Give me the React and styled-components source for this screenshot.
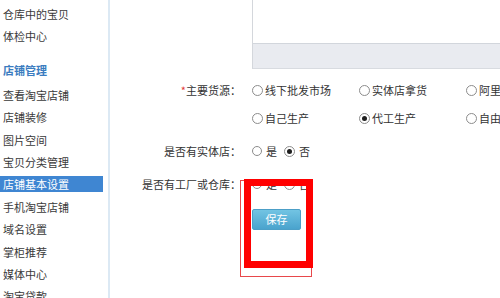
import React from "react";
import styled, { createGlobalStyle } from "styled-components";

const Global = createGlobalStyle`
  html, body { margin: 0; padding: 0; background: #fff; }
  body {
    font-family: "Noto Sans CJK SC", "Microsoft YaHei", sans-serif;
    font-size: 11px;
    color: #333;
    overflow: hidden;
  }
`;

const Page = styled.div`
  position: relative;
  display: flex;
  width: 500px;
  height: 298px;
  overflow: hidden;
`;

const Sidebar = styled.nav`
  width: 108px;
  flex: 0 0 108px;
  border-right: 2px solid #dce9f4;
  display: flex;
  flex-direction: column;
  gap: 6.4px;
  padding-top: 6px;
  box-sizing: content-box;
`;

const NavItem = styled.div`
  height: 16px;
  line-height: 16px;
  padding-left: 3px;
  margin-right: 5px;
  white-space: nowrap;
  flex: 0 0 auto;
  color: ${(p) => (p.$active ? "#fff" : "#3a3a3a")};
  background: ${(p) => (p.$active ? "#3f86d2" : "transparent")};
`;

const NavHeading = styled.div`
  height: 16px;
  line-height: 16px;
  padding-left: 3px;
  margin-top: 11px;
  margin-bottom: 2.6px;
  font-weight: bold;
  color: #3b7cc0;
  flex: 0 0 auto;
`;

const Main = styled.main`
  flex: 1;
  display: flex;
  flex-direction: column;
`;

const TextBox = styled.div`
  margin-left: 142px;
  width: 300px;
  display: flex;
  flex-direction: column;
  border-left: 1px solid #d4d7dc;
  border-bottom: 1px solid #d8dbe0;
`;

const TextArea = styled.div`
  height: 43px;
  background: #fff;
`;

const TextFooter = styled.div`
  height: 24px;
  background: #e9ebf0;
  border-top: 1px solid #d2d6dc;
`;

const Form = styled.div`
  margin-top: 13px;
  display: grid;
  grid-template-columns: 131px 1fr;
  column-gap: 11px;
  row-gap: 17px;
  align-items: start;
`;

const Label = styled.div`
  height: 16px;
  line-height: 16px;
  text-align: right;
  white-space: nowrap;
  color: #333;
`;

const Star = styled.span`
  color: #e3393c;
`;

const OptionGrid = styled.div`
  display: grid;
  grid-template-columns: 107px 107px 107px;
  row-gap: 12px;
`;

const InlineOptions = styled.div`
  display: flex;
  gap: 7px;
`;

const Option = styled.label`
  display: flex;
  align-items: center;
  gap: ${(p) => (p.$tight ? "4px" : "2px")};
  height: 16px;
  line-height: 16px;
  white-space: nowrap;
  color: #333;
`;

const Radio = styled.span`
  width: ${(p) => p.$size || 11}px;
  height: ${(p) => p.$size || 11}px;
  box-sizing: border-box;
  border-radius: 50%;
  border: 1px solid #8c8c8c;
  background: #fff;
  display: flex;
  align-items: center;
  justify-content: center;
  flex: 0 0 auto;
  &::after {
    content: "";
    width: 5px;
    height: 5px;
    border-radius: 50%;
    background: ${(p) => (p.$checked ? "#1e1e1e" : "transparent")};
  }
`;

const ButtonCell = styled.div`
  grid-column: 2;
`;

const SaveButton = styled.button`
  width: 49px;
  height: 21px;
  padding: 0;
  border: 1px solid #4c9fc7;
  border-radius: 2px;
  background: linear-gradient(#72c4e3, #4aa3cd);
  color: #fff;
  font-family: inherit;
  font-size: 11px;
  line-height: 19px;
`;

const Mark = styled.div`
  position: absolute;
  box-sizing: border-box;
  pointer-events: none;
  left: ${(p) => p.$x}px;
  top: ${(p) => p.$y}px;
  width: ${(p) => p.$w}px;
  height: ${(p) => p.$h}px;
  border: ${(p) => p.$b}px solid ${(p) => p.$c};
`;

const navTop = ["仓库中的宝贝", "体检中心"];
const navShop = [
  "查看淘宝店铺",
  "店铺装修",
  "图片空间",
  "宝贝分类管理",
  "店铺基本设置",
  "手机淘宝店铺",
  "域名设置",
  "掌柜推荐",
  "媒体中心",
  "淘宝贷款",
];

const sources = [
  ["线下批发市场", false],
  ["实体店拿货", false],
  ["阿里巴巴批发", false],
  ["自己生产", false],
  ["代工生产", true],
  ["自由公司渠道", false],
];

export default function App() {
  return (
    <>
      <Global />
      <Page>
        <Sidebar>
          {navTop.map((t) => (
            <NavItem key={t}>{t}</NavItem>
          ))}
          <NavHeading>店铺管理</NavHeading>
          {navShop.map((t) => (
            <NavItem key={t} $active={t === "店铺基本设置"}>
              {t}
            </NavItem>
          ))}
        </Sidebar>
        <Main>
          <TextBox>
            <TextArea />
            <TextFooter />
          </TextBox>
          <Form>
            <Label>
              <Star>*</Star>主要货源：
            </Label>
            <OptionGrid>
              {sources.map(([t, c]) => (
                <Option key={t}>
                  <Radio $checked={c} />
                  {t}
                </Option>
              ))}
            </OptionGrid>
            <Label>是否有实体店：</Label>
            <InlineOptions>
              <Option $tight>
                <Radio $size={10} />是
              </Option>
              <Option $tight>
                <Radio $size={11} $checked />否
              </Option>
            </InlineOptions>
            <Label>是否有工厂或仓库：</Label>
            <InlineOptions>
              <Option $tight>
                <Radio $size={10} />是
              </Option>
              <Option $tight>
                <Radio $size={11} />否
              </Option>
            </InlineOptions>
            <ButtonCell>
              <SaveButton>保存</SaveButton>
            </ButtonCell>
          </Form>
        </Main>
        <Mark $x={240} $y={180} $w={72} $h={97} $b={1} $c="#e8484b" />
        <Mark $x={244} $y={179} $w={69} $h={89} $b={7} $c="#ff0000" />
      </Page>
    </>
  );
}
